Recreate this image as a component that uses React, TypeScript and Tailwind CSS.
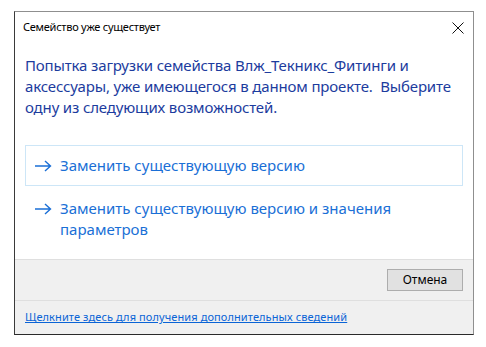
function ArrowIcon() {
  return (
    <svg width="18" height="12" viewBox="0 0 18 12" className="shrink-0">
      <path d="M1 6 H16.5 M11 1 L16.5 6 L11 11" fill="none" stroke="#1a6fd6" strokeWidth="1.4" />
    </svg>
  )
}

function CommandLink({ text, active }: { text: string; active?: boolean }) {
  return (
    <button
      className={
        active
          ? 'w-[438px] flex items-start gap-[8px] border border-[#cde6f7] pl-[8px] pr-3 py-[9px] text-left'
          : 'w-[438px] flex items-start gap-[8px] border border-transparent pl-[8px] pr-3 py-[9px] text-left'
      }
    >
      <span className="h-[21px] flex items-center">
        <ArrowIcon />
      </span>
      <span className="text-[15px] leading-[21px] text-[#1a6fd6] w-[360px]">{text}</span>
    </button>
  )
}

export default function App() {
  return (
    <div className="w-[486px] h-[347px] bg-white pt-[11px] pl-[14px] font-['Noto_Sans',sans-serif]">
      <div className="w-[460px] h-[324px] flex flex-col border border-[#8f8f8f] border-l-[#3a3a3a] border-b-[#2a2a2a]">
        <div className="h-[31px] flex items-center justify-between pl-[8px] pr-[8px] bg-white">
          <span className="text-[11px] tracking-[-0.25px] text-black">Семейство уже существует</span>
          <svg width="12" height="12" viewBox="0 0 12 12" className="mr-[1px]">
            <path d="M0.5 0.5 L11.5 11.5 M11.5 0.5 L0.5 11.5" stroke="#111" strokeWidth="1" />
          </svg>
        </div>

        <div className="flex-1 bg-white flex flex-col px-[10px] pt-[12px]">
          <p className="text-[15px] leading-[21px] text-[#1c3c9e] tracking-[-0.15px]">
            Попытка загрузки семейства Влж_Текникс_Фитинги и аксессуары, уже имеющегося в данном проекте.&nbsp; Выберите одну из следующих возможностей.
          </p>
          <div className="mt-[27px] flex flex-col gap-[2px]">
            <CommandLink text="Заменить существующую версию" active />
            <CommandLink text="Заменить существующую версию и значения параметров" />
          </div>
        </div>

        <div className="h-[41px] bg-[#f0f0f0] border-t border-[#dfdfdf] flex items-center justify-end pr-[10px]">
          <button className="w-[76px] h-[22px] bg-[#e1e1e1] border border-[#adadad] text-[12px] text-black">
            Отмена
          </button>
        </div>

        <div className="h-[34px] bg-[#f0f0f0] border-t border-[#dfdfdf] flex items-center pl-[10px]">
          <a href="#" className="text-[11px] tracking-[0.1px] text-[#0a64d6] underline">
            Щелкните здесь для получения дополнительных сведений
          </a>
        </div>
      </div>
    </div>
  )
}
